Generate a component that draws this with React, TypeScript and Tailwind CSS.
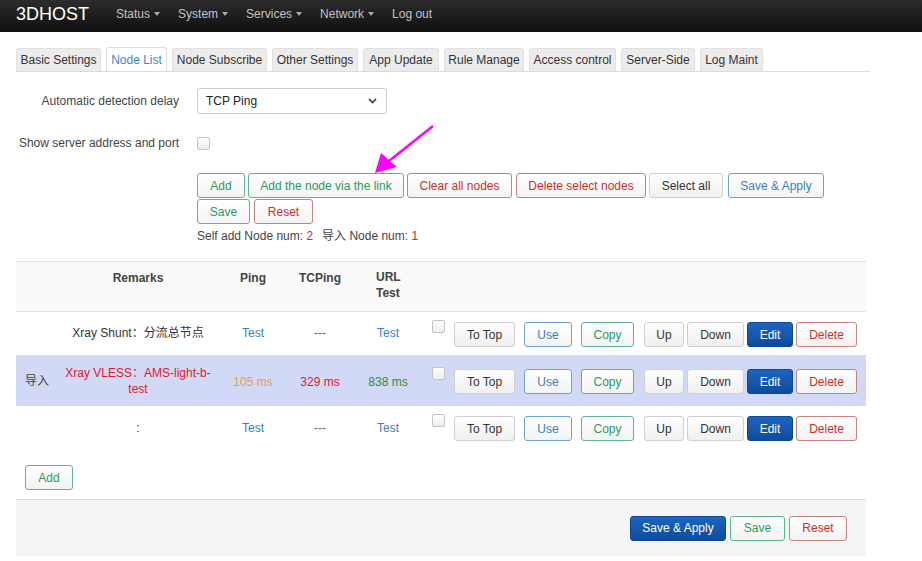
import React from 'react'

type Tone = 'green' | 'red' | 'blue' | 'gray' | 'solid'

const toneClass: Record<Tone, string> = {
  green: 'border-[#5cb88c] text-[#2a9a5c] bg-gradient-to-b from-white to-[#f3f3f3]',
  red: 'border-[#c9817c] text-[#c9302c] bg-gradient-to-b from-white to-[#f3f3f3]',
  blue: 'border-[#6ea3cf] text-[#3a7fc0] bg-gradient-to-b from-white to-[#f3f3f3]',
  gray: 'border-[#d0d0d0] text-[#333] bg-gradient-to-b from-white to-[#efefef]',
  solid: 'border-[#0c4a98] text-white bg-gradient-to-b from-[#1e64bd] to-[#0d4c9c]',
}

function Btn({ tone, w, children }: { tone: Tone; w: string; children: React.ReactNode }) {
  return (
    <button className={`h-[25px] ${w} shrink-0 rounded-[3px] border text-[12px] leading-none ${toneClass[tone]}`}>
      {children}
    </button>
  )
}

function Checkbox() {
  return <span className="inline-block w-[13px] h-[13px] rounded-[2px] border border-[#c4c4c4] bg-gradient-to-b from-white to-[#ececec]" />
}

// widths measured off the reference
const tabs: { label: string; w: string }[] = [
  { label: 'Basic Settings', w: 'w-[85px]' },
  { label: 'Node List', w: 'w-[61px]' },
  { label: 'Node Subscribe', w: 'w-[95px]' },
  { label: 'Other Settings', w: 'w-[86px]' },
  { label: 'App Update', w: 'w-[76px]' },
  { label: 'Rule Manage', w: 'w-[80px]' },
  { label: 'Access control', w: 'w-[87px]' },
  { label: 'Server-Side', w: 'w-[74px]' },
  { label: 'Log Maint', w: 'w-[63px]' },
]

function RowActions() {
  return (
    <div className="flex items-start">
      <div className="mt-[-1px] mr-[9px] ml-[10px]">
        <Checkbox />
      </div>
      <div className="flex items-center mt-[1px]">
        <Btn tone="gray" w="w-[61px]">To Top</Btn>
        <span className="w-[9px]" />
        <Btn tone="blue" w="w-[48px]">Use</Btn>
        <span className="w-[9px]" />
        <Btn tone="green" w="w-[53px]">Copy</Btn>
        <span className="w-[10px]" />
        <Btn tone="gray" w="w-[40px]">Up</Btn>
        <span className="w-[3px]" />
        <Btn tone="gray" w="w-[57px]">Down</Btn>
        <span className="w-[3px]" />
        <Btn tone="solid" w="w-[46px]">Edit</Btn>
        <span className="w-[3px]" />
        <Btn tone="red" w="w-[61px]">Delete</Btn>
      </div>
    </div>
  )
}

export default function App() {
  return (
    <div className="relative w-[922px] h-[561px] bg-white overflow-hidden font-['Liberation_Sans','Noto_Sans_CJK_SC',sans-serif] text-[12px] text-[#333]">
      {/* Top bar */}
      <header className="h-[32px] bg-gradient-to-b from-[#2c2c2c] to-[#101010] flex items-center px-4">
        <span className="text-[18px] text-white leading-none mr-[27px] mt-[-5px]">3DHOST</span>
        <nav className="flex items-center text-[12px] text-[#c4c4c4] gap-[18px] mt-[-4px]">
          {['Status', 'System', 'Services', 'Network'].map((n) => (
            <span key={n} className="flex items-center">
              {n}
              <span className="ml-[4px] inline-block w-0 h-0 border-x-[3.5px] border-x-transparent border-t-[4px] border-t-[#aaa]" />
            </span>
          ))}
          <span>Log out</span>
        </nav>
      </header>

      <div className="ml-4 w-[854px]">
        {/* Tabs */}
        <div className="mt-[16px] flex items-end gap-[5px] border-b border-[#dcdcdc] h-[24px]">
          {tabs.map((t) => (
            <div
              key={t.label}
              className={`${t.w} flex items-center justify-center whitespace-nowrap rounded-t-[3px] border border-b-0 ${
                t.label === 'Node List'
                  ? 'bg-white border-[#ddd] text-[#3a87c9] h-[24px]'
                  : 'bg-[#ececec] border-[#e0e0e0] text-[#333] h-[23px]'
              }`}
            >
              {t.label}
            </div>
          ))}
        </div>

        {/* Form */}
        <div className="mt-[16px] flex items-center h-[26px]">
          <div className="w-[163px] text-right text-[#444]">Automatic detection delay</div>
          <div className="ml-[18px] w-[190px] h-[26px] rounded-[3px] border border-[#ccc] flex items-center justify-between pl-[8px] pr-[9px]">
            <span className="text-[#222]">TCP Ping</span>
            <svg width="9" height="6" viewBox="0 0 9 6">
              <path d="M1 1l3.5 3.5L8 1" fill="none" stroke="#333" strokeWidth="1.6" />
            </svg>
          </div>
        </div>
        <div className="mt-[21px] flex items-center h-[16px]">
          <div className="w-[163px] text-right text-[#444]">Show server address and port</div>
          <div className="ml-[18px] flex items-center">
            <Checkbox />
          </div>
        </div>

        <div className="ml-[181px] mt-[22px]">
          <div className="flex items-center">
            <Btn tone="green" w="w-[48px]">Add</Btn>
            <span className="w-[3px]" />
            <Btn tone="green" w="w-[156px]">Add the node via the link</Btn>
            <span className="w-[3px]" />
            <Btn tone="red" w="w-[105px]">Clear all nodes</Btn>
            <span className="w-[4px]" />
            <Btn tone="red" w="w-[130px]">Delete select nodes</Btn>
            <span className="w-[3px]" />
            <Btn tone="gray" w="w-[74px]">Select all</Btn>
            <span className="w-[5px]" />
            <Btn tone="blue" w="w-[96px]">Save &amp; Apply</Btn>
          </div>
          <div className="flex items-center gap-[4px] mt-[1px]">
            <Btn tone="green" w="w-[53px]">Save</Btn>
            <Btn tone="red" w="w-[59px]">Reset</Btn>
          </div>
          <div className="mt-[3px] h-[18px] leading-[18px] text-[#444]">
            Self add Node num: <span className="text-[#c9302c]">2</span>
            <span className="ml-[9px]">导入 Node num: </span>
            <span className="text-[#c9302c]">1</span>
          </div>
        </div>

        {/* Table */}
        <div className="mt-[16px] w-[850px] border-t border-[#e2e2e2]">
          <div className="flex h-[50px] bg-[#f9f9f9] border-b border-[#e2e2e2] font-bold text-[#444]">
            <div className="w-[40px]" />
            <div className="w-[164px] text-center pt-[7px]">Remarks</div>
            <div className="w-[66px] text-center pt-[7px]">Ping</div>
            <div className="w-[68px] text-center pt-[7px]">TCPing</div>
            <div className="w-[68px] pt-[7px] pl-[22px] leading-[16px]">
              URL
              <br />
              Test
            </div>
          </div>

          <div className="flex h-[43px] pt-[9px]">
            <div className="w-[40px]" />
            <div className="w-[164px] text-center text-[#333] pt-[3px]">Xray Shunt：分流总节点</div>
            <div className="w-[66px] text-center text-[#3a7fc0] pt-[3px]">Test</div>
            <div className="w-[68px] text-center text-[#666] pt-[3px]">---</div>
            <div className="w-[68px] text-center text-[#3a7fc0] pt-[3px]">Test</div>
            <RowActions />
          </div>

          <div className="flex h-[51px] bg-[#d1d9f6] pt-[13px]">
            <div className="w-[40px] pl-[9px] pt-[4px] text-[#444]">导入</div>
            <div className="w-[164px] text-center text-[#e0182d] leading-[16px] mt-[-3px]">
              Xray VLESS：AMS-light-b-
              <br />
              test
            </div>
            <div className="w-[66px] text-center text-[#f0993a] pt-[5px]">105 ms</div>
            <div className="w-[68px] text-center text-[#e0182d] pt-[5px]">329 ms</div>
            <div className="w-[68px] text-center text-[#2e8b3c] pt-[5px]">838 ms</div>
            <RowActions />
          </div>

          <div className="flex h-[45px] pt-[9px]">
            <div className="w-[40px]" />
            <div className="w-[164px] text-center text-[#333] pt-[4px]">:</div>
            <div className="w-[66px] text-center text-[#3a7fc0] pt-[4px]">Test</div>
            <div className="w-[68px] text-center text-[#666] pt-[4px]">---</div>
            <div className="w-[68px] text-center text-[#3a7fc0] pt-[4px]">Test</div>
            <RowActions />
          </div>
        </div>

        <div className="mt-[14px] ml-[9px]">
          <Btn tone="green" w="w-[48px]">Add</Btn>
        </div>

        {/* Footer actions */}
        <div className="mt-[9px] w-[850px] h-[57px] bg-[#f5f5f5] border-t border-[#dedede] flex items-center justify-end pr-[19px] gap-[4px]">
          <Btn tone="solid" w="w-[96px]">Save &amp; Apply</Btn>
          <Btn tone="green" w="w-[55px]">Save</Btn>
          <Btn tone="red" w="w-[58px]">Reset</Btn>
        </div>
      </div>

      {/* Annotation arrow */}
      <svg className="absolute left-0 top-0 pointer-events-none" width="922" height="561">
        <line x1="433" y1="126" x2="389" y2="161" stroke="#ff00ff" strokeWidth="2.5" />
        <polygon points="375,173 381,153 397,167" fill="#ff00ff" />
      </svg>
    </div>
  )
}
